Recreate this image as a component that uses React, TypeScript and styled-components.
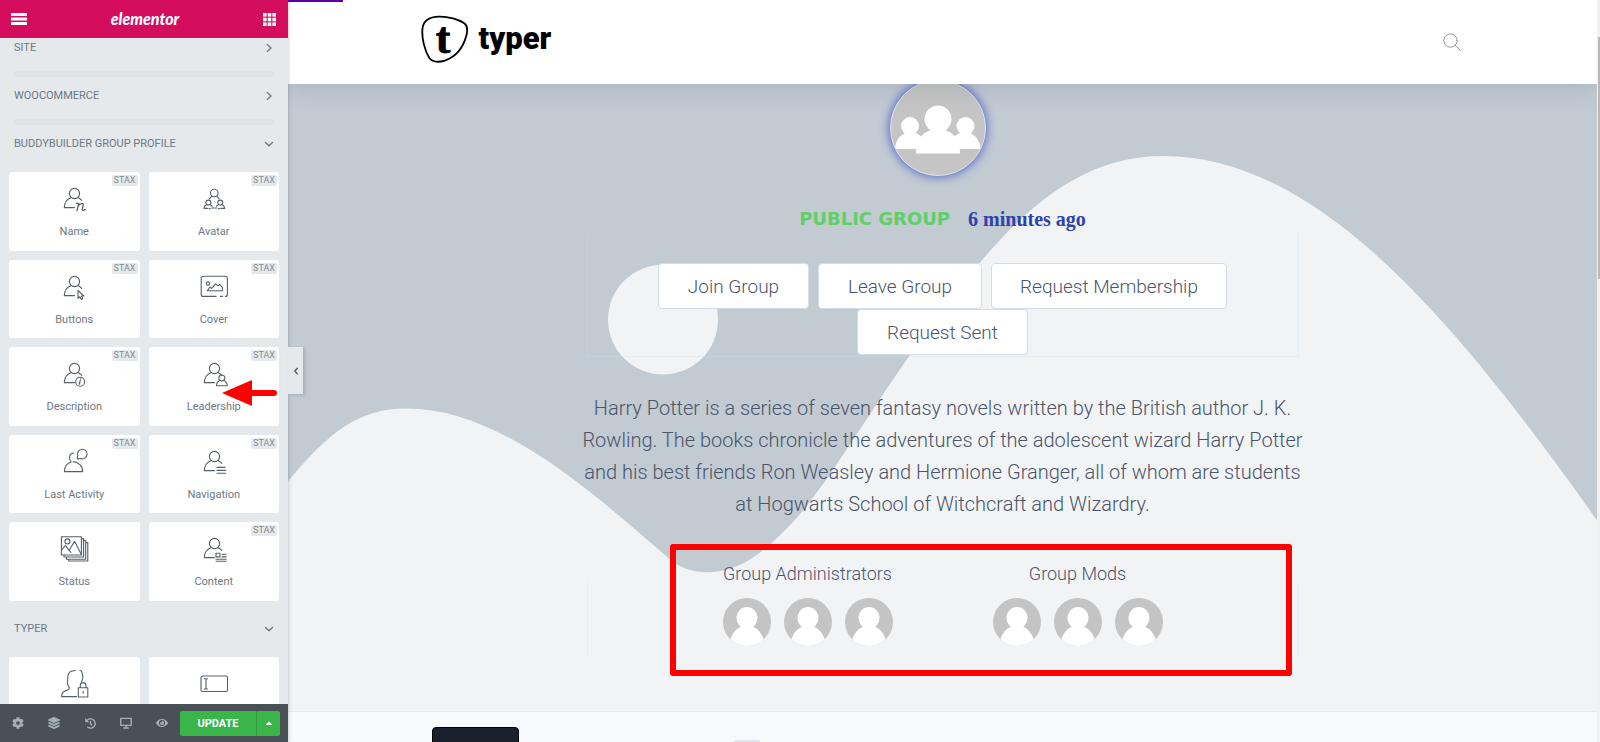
import React from "react";
import styled, { createGlobalStyle } from "styled-components";
import { FaCog, FaLayerGroup, FaHistory, FaEye, FaCaretUp } from "react-icons/fa";

const GlobalStyle = createGlobalStyle`
  *, *::before, *::after { box-sizing: border-box; }
  body { margin: 0; font-family: Roboto, sans-serif; overflow: hidden; }
  button { font: inherit; border: 0; padding: 0; background: none; color: inherit; cursor: pointer; }
  a { color: inherit; text-decoration: none; }
  h1, h2, h3, p { margin: 0; font-weight: inherit; }
  svg { display: block; }
`;

const Editor = styled.div`
  display: grid;
  grid-template-columns: 288px 1fr 3px;
  height: 100vh;
  overflow: hidden;
`;

/* ---------- sidebar ---------- */

const Sidebar = styled.aside`
  position: relative;
  z-index: 5;
  display: flex;
  flex-direction: column;
  min-height: 0;
  background: #e6e9ec;
  box-shadow: 0 0 4px rgba(0, 0, 0, 0.25);
`;

const SidebarHeader = styled.header`
  position: relative;
  display: flex;
  flex: none;
  align-items: center;
  justify-content: space-between;
  height: 38px;
  padding: 0 12px 0 11px;
  background: #d30c5c;
  color: #fff;
`;

const Brand = styled.h1`
  font: italic 900 16px/20px Lato, sans-serif;
`;

const PanelBody = styled.div`
  flex: 1;
  min-height: 0;
  overflow: hidden;
`;

/* The list is scrolled a little way under the header. */
const PanelContent = styled.div`
  margin-top: -9px;
`;

const SectionToggle = styled.button`
  display: flex;
  align-items: center;
  justify-content: space-between;
  width: 100%;
  height: 38px;
  padding: 0 14px;
  color: #6d7882;
  font-size: 11px;
  line-height: 16px;
  text-transform: uppercase;
`;

const Divider = styled.hr`
  height: 6px;
  margin: 4px 14px 0;
  border: 0;
  background: #e0e3e6;
`;

const WidgetGrid = styled.div<{ $height: number; $rows: number }>`
  display: grid;
  grid-template-columns: 1fr 1fr;
  grid-template-rows: repeat(${(p) => p.$rows}, 1fr);
  gap: 9px;
  height: ${(p) => p.$height}px;
  margin: 9px 0;
  padding: 0 9px;
`;

const WidgetCard = styled.button`
  position: relative;
  display: flex;
  flex-direction: column;
  align-items: center;
  padding-top: 13px;
  border-radius: 3px;
  background: #fff;
  color: #556068;
  font-size: 11px;
  line-height: 14px;
`;

const WidgetLabel = styled.span`
  margin-top: 10px;
  color: #6d7882;
`;

const StaxBadge = styled.span`
  position: absolute;
  top: 3px;
  right: 2px;
  padding: 0 2px;
  border-radius: 2px;
  background: #e6e9ec;
  color: #858b91;
  font-size: 9px;
  line-height: 11px;
`;

const Pointer = styled.svg`
  position: absolute;
  top: 32px;
  left: 73px;
`;

const CollapseTab = styled.button`
  position: absolute;
  top: 347px;
  left: 100%;
  display: grid;
  place-items: center;
  width: 15px;
  height: 47px;
  background: #e6e9ec;
  box-shadow: 2px 1px 3px rgba(0, 0, 0, 0.15);
  color: #556068;
`;

const SidebarFooter = styled.footer`
  display: flex;
  flex: none;
  align-items: center;
  height: 38px;
  padding-right: 8px;
  background: #495157;
  color: #a4afb7;
`;

const FooterTools = styled.div`
  display: grid;
  flex: 1;
  grid-template-columns: repeat(5, 1fr);
`;

const FooterTool = styled.button`
  display: grid;
  place-items: center;
  height: 38px;
  font-size: 12px;
`;

const Update = styled.button`
  width: 76px;
  height: 25px;
  border-radius: 2px 0 0 2px;
  background: #39b54a;
  color: #fff;
  font-size: 11px;
  font-weight: 700;
`;

const UpdateMore = styled.button`
  display: grid;
  place-items: center;
  width: 24px;
  height: 25px;
  border-left: 1px solid #2f963d;
  border-radius: 0 2px 2px 0;
  background: #39b54a;
  color: #fff;
  font-size: 10px;
`;

/* ---------- preview ---------- */

const Preview = styled.main`
  position: relative;
  min-width: 0;
  overflow: hidden;
  background: #f6fafd;
`;

const SiteHeader = styled.header`
  position: relative;
  z-index: 2;
  height: 84px;
  background: #fff;
  box-shadow: 0 2px 24px rgba(70, 90, 100, 0.22);
`;

const Progress = styled.div`
  position: absolute;
  top: 0;
  left: 0;
  width: 55px;
  height: 2px;
  background: #5a00a8;
`;

const HeaderInner = styled.div`
  display: flex;
  align-items: center;
  justify-content: space-between;
  max-width: 1044px;
  height: 78px;
  margin: 0 auto;
  padding-right: 4px;
`;

const Logo = styled.a`
  display: flex;
  align-items: center;
  gap: 10px;
  color: #000;
  font-size: 31px;
  line-height: 34px;
  font-weight: 900;
`;

const SearchButton = styled.button`
  margin-top: 6px;
  color: #999;
`;

const Hero = styled.section`
  position: relative;
  height: 628px;
  border-bottom: 1px solid #e6eaed;
  background: #c2cad2;
  color: #4a556b;
`;

const Waves = styled.svg`
  position: absolute;
  inset: 0;
  width: 100%;
  height: 100%;
`;

const HeroColumn = styled.div`
  position: relative;
  display: flex;
  flex-direction: column;
  align-items: center;
  width: 712px;
  max-width: 100%;
  margin: 0 auto;
`;

const GroupAvatar = styled.div`
  width: 96px;
  height: 96px;
  margin: -4px 10px 0 0;
  border: 1px solid #dde3ee;
  border-radius: 50%;
  background: #c5c5c5;
  box-shadow: 0 0 10px 1px #5568cc;
  overflow: hidden;
`;

const GroupMeta = styled.div`
  display: flex;
  align-items: center;
  justify-content: center;
  gap: 18px;
  height: 28px;
  margin-top: 29px;
`;

const GroupType = styled.span`
  color: #5fd068;
  font: 700 18px/28px "DejaVu Sans", sans-serif;
  text-transform: uppercase;
`;

const LastActive = styled.span`
  color: #2d43ab;
  font: 700 20px/28px "Liberation Serif", serif;
`;

const ButtonArea = styled.div`
  display: flex;
  flex-wrap: wrap;
  align-content: flex-start;
  justify-content: center;
  column-gap: 9px;
  width: 100%;
  height: 124px;
  padding: 30px 50px 0;
  border: solid rgba(200, 225, 240, 0.3);
  border-width: 0 1px 1px;
`;

const GroupButton = styled.button<{ $width: number }>`
  width: ${(p) => p.$width}px;
  height: 46px;
  border: 1px solid #d3dde9;
  border-radius: 4px;
  background: #fff;
  color: #4a556b;
  font-size: 19px;
  font-weight: 300;
`;

const Description = styled.p`
  margin-top: 35px;
  font-size: 20px;
  line-height: 32px;
  font-weight: 300;
  text-align: center;
  white-space: nowrap;
`;

const DescriptionLine = styled.span`
  display: block;
`;

const Leaders = styled.div`
  display: grid;
  grid-template-columns: 270px 270px;
  justify-content: center;
  width: 100%;
  margin-top: 42px;
`;

const LeaderGroup = styled.section`
  display: flex;
  flex-direction: column;
  align-items: center;
  gap: 12px;
`;

const LeaderTitle = styled.h3`
  font-size: 18px;
  line-height: 24px;
  font-weight: 300;
`;

const AvatarRow = styled.div`
  display: flex;
  gap: 13px;
`;

const Highlight = styled.div`
  position: absolute;
  top: 544px;
  left: calc(50% - 273px);
  width: 622px;
  height: 132px;
  border: 6px solid #f00;
  border-radius: 3px;
`;

const RailLine = styled.div<{ $side: "left" | "right" }>`
  position: absolute;
  top: 498px;
  ${(p) => p.$side}: 0;
  width: 1px;
  height: 74px;
  background: #e3edf4;
`;

const NextSection = styled.div`
  display: flex;
  align-items: flex-start;
  max-width: 1021px;
  height: 60px;
  margin: 0 auto;
  padding-top: 15px;
`;

const DarkBlock = styled.div`
  width: 87px;
  height: 45px;
  border: 1px solid #000;
  border-radius: 4px;
  background: #1a202c;
`;

const PaleBlock = styled.div`
  width: 28px;
  height: 32px;
  margin: 13px 0 0 214px;
  border-radius: 4px;
  background: #e2e8ee;
`;

const ScrollTrack = styled.div`
  background: #f1f1f1;
`;

const ScrollThumb = styled.div`
  height: 242px;
  margin: 37px 0 0 1px;
  background: #b9b9b9;
`;

/* ---------- drawings ---------- */

const line = {
  fill: "none",
  stroke: "currentColor",
  strokeWidth: 1.1,
  strokeLinecap: "round" as const,
  strokeLinejoin: "round" as const,
};

const Icon = ({ children }: { children: React.ReactNode }) => (
  <svg width="30" height="30" viewBox="0 0 30 30" {...line}>
    {children}
  </svg>
);

const Person = () => (
  <>
    <circle cx="15.5" cy="8.5" r="5.1" />
    <path d="M12.4 12.6C8.5 14 5.5 17.6 5.3 22.6H15.5M18.6 12.6C20.4 13.3 21.6 14 22.8 15.3" />
  </>
);

const icons: Record<string, React.ReactNode> = {
  Name: (
    <Icon>
      <Person />
      <path strokeWidth="1.3" d="M17.6 18.400h2.200L18 25.500M19 21.400c1.800-3 5.800-4.200 5.200-.9l-.9 3.700c-.3 1.600 1.600 1.500 3 .2" />
    </Icon>
  ),
  Avatar: (
    <Icon>
      <circle cx="15.3" cy="8" r="3.8" />
      <path d="M12.8 11.2l-2.4 2.6M17.8 11.2l2.4 2.6" />
      <circle cx="9.4" cy="17.6" r="2.5" />
      <circle cx="21.3" cy="17.6" r="2.5" />
      <path d="M7.7 19.6C6 20.5 5 22 5 23.4h3.8M11.2 19.6l2 1.6M19.4 19.6l-2 1.6M23 19.6c1.7.9 2.7 2.4 2.7 3.8h-3.8M12.6 23h5.4M11.2 23.6h-1M19.5 23.6h1" />
    </Icon>
  ),
  Buttons: (
    <Icon>
      <Person />
      <path d="M19 17.4v8l1.9-1.7 1.4 2.7 1.4-.7-1.2-2.7h2.3z" fill="#fff" />
    </Icon>
  ),
  Cover: (
    <Icon>
      <path d="M17 23.4H4.2a2 2 0 0 1-2-2V5.2a2 2 0 0 1 2-2h22.2a2 2 0 0 1 2 2v16.2a2 2 0 0 1-2 2M21.5 23.4h2" />
      <circle cx="9" cy="10.6" r="1.7" />
      <path d="M8.2 17.8l2.7-3.6 1.8 1.2 4-4.6 2.2 2 1.7-1.4 2.8 3v3.4z" />
    </Icon>
  ),
  Description: (
    <Icon>
      <Person />
      <circle cx="21.2" cy="21.8" r="4.5" fill="#fff" />
      <path d="M21.2 20.6l-.9 3.600M21.8 18.900l-.1.200" strokeWidth="1.3" />
    </Icon>
  ),
  Leadership: (
    <Icon>
      <Person />
      <circle cx="22.8" cy="18" r="3" />
      <path d="M20.8 20.4c-2 .9-3.3 2.8-3.4 5.4h10.9c-.1-2.6-1.4-4.5-3.5-5.4" />
    </Icon>
  ),
  "Last Activity": (
    <Icon>
      <path d="M14.500 5C10.600 5.400 9 9.800 12.200 14 8.600 15.200 5.500 18.500 5.400 23.600h18.200c.6-5-4-9.800-9.600-9.900" />
      <path d="M18.200 11l.5-3.500a4.800 4.800 0 1 1 3 3.100z" />
    </Icon>
  ),
  Navigation: (
    <Icon>
      <Person />
      <path d="M18 19.4h8M18 22.4h8.6M18 25.2h8.6" />
    </Icon>
  ),
  Status: (
    <Icon>
      <path d="M2.4 1.8h20v18.2h-20zM22.8 3.6h1.8v18.4H5v-1.5M24.9 5.6h1.8v18.6H7.5v-1.5M27 7.6h1.8v18.4H9.8v-1.2" />
      <circle cx="8.4" cy="6.4" r="2.5" />
      <path d="M2.6 15l3.8-4.3 3.8 4.6 5.4-9 6.6 13M10.2 15.3l1.7 2.2" />
    </Icon>
  ),
  Content: (
    <Icon>
      <Person />
      <path d="M17 18.3h4v3.6h-4zM23 19.2h4.2M23 21.9h4.2M17 24.3h10.2M17 26.2h10.2" />
    </Icon>
  ),
  lock: (
    <Icon>
      <path d="M17.500 26.600H2.700c-.2-3.200 1.300-5.100 4.300-6 2.400-.7 3.700-1.600 2.900-3.800-1.200-2-2-3.700-1.300-5.700.2-3.400-.1-6.500 1.600-8.500C11.500.8 14 .9 16 .400c1-1.500 4.800-1.500 6 .5 2 2 1.300 3.600 1.700 5.100.6 2.300-.4 4.300-1.200 6" />
      <path d="M19.300 17.800h9.500v9.200h-9.500zM21.300 17.600v-2.200c0-3.700 5.600-3.700 5.600 0v2.200M24.100 21.200v2" />
    </Icon>
  ),
  field: (
    <Icon>
      <rect x="2" y="6" width="26.500" height="15.500" rx="1.500" />
      <path d="M5.500 8.800h3M7 8.800v10.200M5.500 19h3" />
    </Icon>
  ),
};

const Chevron = ({ d }: { d: string }) => (
  <svg width="10" height="10" viewBox="0 0 10 10" {...line} strokeWidth="1.4">
    <path d={d} />
  </svg>
);
const RIGHT = "M3.5 1.8L7 5 3.5 8.2";
const DOWN = "M1.5 3.4L5 6.7 8.5 3.4";
const LEFT = "M6.3 2.2L3.7 5l2.6 2.8";

const LeaderAvatar = () => (
  <svg width="48" height="48" viewBox="0 0 48 48" role="img" aria-label="Member avatar">
    <clipPath id="disc">
      <circle cx="24" cy="24" r="24" />
    </clipPath>
    <g clipPath="url(#disc)">
      <rect width="48" height="48" fill="#c4c4c4" />
      <ellipse cx="24" cy="20" rx="10.5" ry="11" fill="#fff" />
      <path d="M6 46C8 36 14 29 20 28.6h8C34 29 40 36 42 46v4H6z" fill="#fff" />
    </g>
  </svg>
);

const widgets = [
  { name: "Name", stax: true },
  { name: "Avatar", stax: true },
  { name: "Buttons", stax: true },
  { name: "Cover", stax: true },
  { name: "Description", stax: true },
  { name: "Leadership", stax: true },
  { name: "Last Activity", stax: true },
  { name: "Navigation", stax: true },
  { name: "Status", stax: false },
  { name: "Content", stax: true },
];

const groupButtons = [
  { label: "Join Group", width: 151 },
  { label: "Leave Group", width: 164 },
  { label: "Request Membership", width: 236 },
  { label: "Request Sent", width: 171 },
];

const description = [
  "Harry Potter is a series of seven fantasy novels written by the British author J. K.",
  "Rowling. The books chronicle the adventures of the adolescent wizard Harry Potter",
  "and his best friends Ron Weasley and Hermione Granger, all of whom are students",
  "at Hogwarts School of Witchcraft and Wizardry.",
];

export default function App() {
  return (
    <>
      <GlobalStyle />
      <Editor>
        <Sidebar>
          <SidebarHeader>
            <button aria-label="Menu">
              <svg width="16" height="12" viewBox="0 0 16 12" fill="currentColor">
                <path d="M0 0h16v3H0zM0 4.5h16v3H0zM0 9h16v3H0z" />
              </svg>
            </button>
            <Brand>elementor</Brand>
            <button aria-label="Widgets">
              <svg width="13" height="13" viewBox="0 0 13 13" fill="currentColor">
                {[0, 4.7, 9.4].map((y) =>
                  [0, 4.7, 9.4].map((x) => <rect key={`${x}-${y}`} x={x} y={y} width="3.6" height="3.6" />)
                )}
              </svg>
            </button>
          </SidebarHeader>

          <PanelBody>
            <PanelContent>
              <SectionToggle>
                Site <Chevron d={RIGHT} />
              </SectionToggle>
              <Divider />
              <SectionToggle>
                WooCommerce <Chevron d={RIGHT} />
              </SectionToggle>
              <Divider />
              <SectionToggle>
                BuddyBuilder Group Profile <Chevron d={DOWN} />
              </SectionToggle>
              <WidgetGrid $height={429} $rows={5}>
                {widgets.map((w) => (
                  <WidgetCard key={w.name}>
                    {icons[w.name]}
                    <WidgetLabel>{w.name}</WidgetLabel>
                    {w.stax && <StaxBadge>STAX</StaxBadge>}
                    {w.name === "Leadership" && (
                      <Pointer width="56" height="28" viewBox="0 0 56 28" aria-hidden="true">
                        <path d="M0 14L30 1v26z" fill="#f00" />
                        <path d="M28 14h24" stroke="#f00" strokeWidth="6" strokeLinecap="round" />
                      </Pointer>
                    )}
                  </WidgetCard>
                ))}
              </WidgetGrid>
              <SectionToggle>
                Typer <Chevron d={DOWN} />
              </SectionToggle>
              <WidgetGrid $height={79} $rows={1}>
                <WidgetCard aria-label="Restricted content">{icons.lock}</WidgetCard>
                <WidgetCard aria-label="Search field">{icons.field}</WidgetCard>
              </WidgetGrid>
            </PanelContent>
          </PanelBody>

          <SidebarFooter>
            <FooterTools>
              <FooterTool aria-label="Settings"><FaCog /></FooterTool>
              <FooterTool aria-label="Navigator"><FaLayerGroup /></FooterTool>
              <FooterTool aria-label="History"><FaHistory size={11} /></FooterTool>
              <FooterTool aria-label="Responsive mode">
                <svg width="12" height="12" viewBox="0 0 12 12" {...line} strokeWidth="1.4">
                  <path d="M.8 1.4h10.4v7H.8zM6 8.4v2.4M3.7 11h4.6" />
                </svg>
              </FooterTool>
              <FooterTool aria-label="Preview"><FaEye /></FooterTool>
            </FooterTools>
            <Update>UPDATE</Update>
            <UpdateMore aria-label="Save options"><FaCaretUp /></UpdateMore>
          </SidebarFooter>

          <CollapseTab aria-label="Hide panel">
            <Chevron d={LEFT} />
          </CollapseTab>
        </Sidebar>

        <Preview>
          <SiteHeader>
            <Progress />
            <HeaderInner>
              <Logo href="#">
                <svg width="48" height="48" viewBox="0 0 48 48">
                  <path
                    d="M18 1.6C27 1.4 38 4.6 43.3 8.300c3.400 2.400 3.500 7 2 12.400C42.300 32 36 41 24.500 45.300 18 47.400 12 47.800 8.500 43.300 3.500 35.500.5 22.500 1.500 13.500 2.300 5.500 8 1.900 18 1.600z"
                    fill="none"
                    stroke="#000"
                    strokeWidth="1.8"
                  />
                  <text x="22" y="38" textAnchor="middle" fontFamily="Liberation Serif, serif" fontWeight="700" fontSize="44" stroke="#000" strokeWidth="0.8">
                    t
                  </text>
                </svg>
                typer
              </Logo>
              <SearchButton aria-label="Search">
                <svg width="18" height="18" viewBox="0 0 18 18" {...line} strokeWidth="1">
                  <circle cx="7.500" cy="7.500" r="6.700" />
                  <path d="M12.300 12.300l5 5" />
                </svg>
              </SearchButton>
            </HeaderInner>
          </SiteHeader>

          <Hero>
            <Waves viewBox="288 84 1309 628" preserveAspectRatio="none" aria-hidden="true">
              <path
                fill="#f1f3f5"
                d="M288 482C330 431 360 409 406 409C500 409 590 491 671 561C681 569 693 573 707 573C740 573 763 553 785 531C825 491 862 423 909 357C985 250 1055 156 1163 156C1315 156 1449 312 1597 521V712H288z"
              />
              <circle cx="663" cy="320" r="55" fill="#f1f3f5" />
            </Waves>
            <HeroColumn>
              <GroupAvatar>
                <svg width="94" height="94" viewBox="0 -2 94 94" fill="#fff" role="img" aria-label="Group avatar">
                  <circle cx="47" cy="36" r="13.500" />
                  <path d="M25 70.500C25 56 34 47 42 47h10c8 0 17 9 17 23.500z" />
                  <circle cx="19" cy="43" r="9" />
                  <path d="M4 66c0-8 6-16 12-16h6c5 0 8 3 10 6l-6 10z" />
                  <circle cx="74.500" cy="43" r="9" />
                  <path d="M89.500 66c0-8-6-16-12-16h-6c-5 0-8 3-10 6l6 10z" />
                </svg>
              </GroupAvatar>
              <GroupMeta>
                <GroupType>Public Group</GroupType>
                <LastActive>6 minutes ago</LastActive>
              </GroupMeta>
              <ButtonArea>
                {groupButtons.map((b) => (
                  <GroupButton key={b.label} $width={b.width}>
                    {b.label}
                  </GroupButton>
                ))}
              </ButtonArea>
              <Description>
                {description.map((text) => (
                  <DescriptionLine key={text}>{text} </DescriptionLine>
                ))}
              </Description>
              <Leaders>
                {["Group Administrators", "Group Mods"].map((title) => (
                  <LeaderGroup key={title}>
                    <LeaderTitle>{title}</LeaderTitle>
                    <AvatarRow>
                      <LeaderAvatar />
                      <LeaderAvatar />
                      <LeaderAvatar />
                    </AvatarRow>
                  </LeaderGroup>
                ))}
              </Leaders>
              <RailLine $side="left" />
              <RailLine $side="right" />
            </HeroColumn>
          </Hero>

          <NextSection>
            <DarkBlock />
            <PaleBlock />
          </NextSection>
          <Highlight />
        </Preview>

        <ScrollTrack>
          <ScrollThumb />
        </ScrollTrack>
      </Editor>
    </>
  );
}
